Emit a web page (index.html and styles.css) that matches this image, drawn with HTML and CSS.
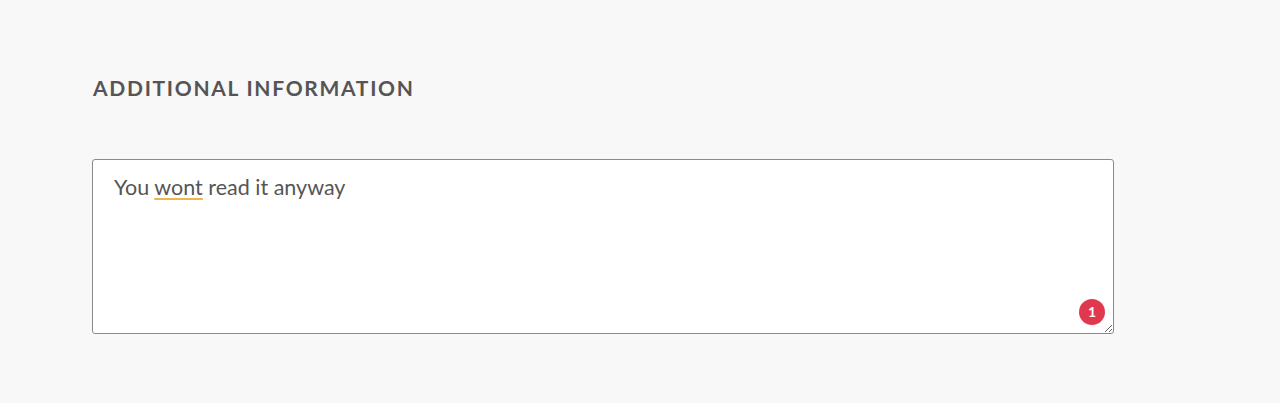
FILE: index.html
```html
<!DOCTYPE html>
<html>
<head>
<meta charset="utf-8">
<link rel="stylesheet" href="styles.css">
</head>
<body>
<section class="section">
  <h2 class="title">ADDITIONAL INFORMATION</h2>
  <div class="field">
    <div class="textarea" contenteditable="true">You <span class="flag">wont</span> read it anyway</div>
    <span class="badge">1</span>
  </div>
</section>
</body>
</html>
```
FILE: styles.css
```css
html, body {
  margin: 0;
  padding: 0;
  background: #f8f8f8;
}
body {
  font-family: Lato, "Open Sans", sans-serif;
  color: #555;
}
.section {
  padding: 74px 0 0 92px;
  width: 1022px;
}
.title {
  margin: 0 0 0 1px;
  font-size: 21px;
  line-height: 28px;
  font-weight: 700;
  letter-spacing: 1.7px;
  color: #555;
}
.field {
  position: relative;
  margin-top: 57px;
}
.textarea {
  box-sizing: border-box;
  height: 175px;
  background: #fff;
  border: 1px solid #8a8a8a;
  border-radius: 3px;
  padding: 13px 21px;
  font-size: 21.5px;
  line-height: 28px;
  color: #555;
  resize: vertical;
  overflow: auto;
  outline: none;
}
.flag {
  text-decoration: underline;
  text-decoration-color: #f0b44c;
  text-decoration-thickness: 2px;
  text-underline-offset: 3px;
}
.badge {
  position: absolute;
  right: 9px;
  bottom: 9px;
  width: 26px;
  height: 26px;
  border-radius: 50%;
  background: #e0394f;
  color: #fff;
  font-size: 14px;
  font-weight: 700;
  line-height: 26px;
  text-align: center;
}
```
